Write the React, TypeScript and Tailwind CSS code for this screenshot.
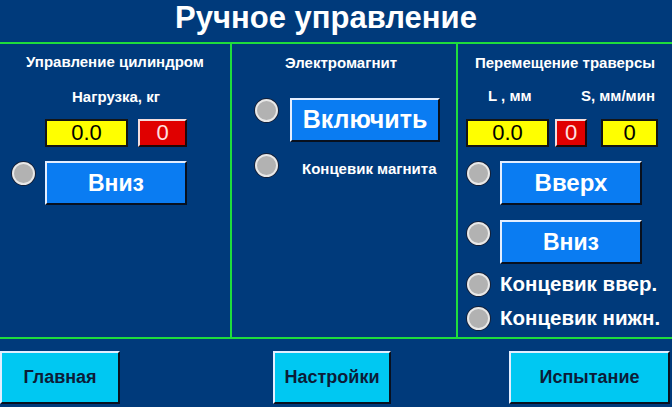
import type { ReactNode } from "react";

const bevel =
  "border-2 border-t-[#e4eeff] border-l-[#e4eeff] border-b-[#08101e] border-r-[#08101e]";

function Lamp({ className = "" }: { className?: string }) {
  return (
    <div
      className={`w-[23px] h-[23px] shrink-0 rounded-full bg-[#b2b2b2] border-2 border-[#e8e8e8] ring-1 ring-[#142038] ${className}`}
    />
  );
}

function BlueButton({
  children,
  className = "",
}: {
  children: ReactNode;
  className?: string;
}) {
  return (
    <button
      className={`h-[44px] bg-[#0a7cf2] text-white font-bold ${bevel} flex items-center justify-center ${className}`}
    >
      {children}
    </button>
  );
}

function YellowBox({ value, className = "" }: { value: string; className?: string }) {
  return (
    <div
      className={`h-[28px] bg-[#ffff00] border-2 border-[#141414] text-black text-[22px] leading-none flex items-center justify-center ${className}`}
    >
      {value}
    </div>
  );
}

function RedBox({ className = "" }: { className?: string }) {
  return (
    <div
      className={`h-[28px] bg-[#e00000] border-2 border-t-[#f4dede] border-l-[#f4dede] border-b-[#200808] border-r-[#200808] text-[#ffe0e0] text-[22px] leading-none flex items-center justify-center ${className}`}
    >
      0
    </div>
  );
}

function NavButton({ label, className = "" }: { label: string; className?: string }) {
  return (
    <button
      className={`h-[53px] bg-[#00c8f2] text-[#0c1c38] text-[18px] font-bold ${bevel} flex items-center justify-center ${className}`}
    >
      {label}
    </button>
  );
}

export default function App() {
  return (
    <div
      className="w-[672px] h-[407px] bg-[#003a7b] text-white overflow-hidden flex flex-col"
      style={{ fontFamily: '"Liberation Sans", Arial, sans-serif' }}
    >
      <div className="h-[42px] pt-[2px] pr-[20px] text-center">
        <h1 className="text-[31px] font-bold leading-none">Ручное управление</h1>
      </div>
      <div className="h-[2px] bg-[#1fdc3c]" />

      <div className="h-[293px] flex">
        {/* Управление цилиндром */}
        <div className="w-[230px] flex flex-col">
          <div className="mt-[9px] text-[15px] font-bold leading-[18px] text-center">
            Управление цилиндром
          </div>
          <div className="mt-[17px] text-[15px] font-bold leading-[18px] text-center pl-[2px]">
            Нагрузка, кг
          </div>
          <div className="mt-[13px] flex gap-[10px] pl-[45px]">
            <YellowBox value="0.0" className="w-[83px]" />
            <RedBox className="w-[49px]" />
          </div>
          <div className="mt-[14px] flex items-start gap-[10px] pl-[12px]">
            <Lamp className="mt-[1px]" />
            <BlueButton className="w-[142px] text-[23px]">Вниз</BlueButton>
          </div>
        </div>

        <div className="w-[2px] bg-[#1fdc3c]" />

        {/* Электромагнит */}
        <div className="w-[224px] flex flex-col">
          <div className="mt-[10px] text-[15px] font-bold leading-[18px] text-center -ml-[6px]">
            Электромагнит
          </div>
          <div className="mt-[26px] flex items-start gap-[12px] pl-[23px]">
            <Lamp className="mt-[1px]" />
            <BlueButton className="w-[150px] text-[25px]">Включить</BlueButton>
          </div>
          <div className="mt-[11px] flex items-center pl-[23px]">
            <Lamp />
            <span className="ml-[24px] mt-[7px] text-[15px] font-bold leading-[18px]">
              Концевик магнита
            </span>
          </div>
        </div>

        <div className="w-[2px] bg-[#1fdc3c]" />

        {/* Перемещение траверсы */}
        <div className="flex-1 flex flex-col">
          <div className="mt-[10px] text-[15px] font-bold leading-[18px] text-center">
            Перемещение траверсы
          </div>
          <div className="mt-[15px] flex text-[15px] font-bold leading-[18px]">
            <span className="ml-[30px]">L , мм</span>
            <span className="ml-auto mr-[17px]">S, мм/мин</span>
          </div>
          <div className="mt-[14px] flex pl-[8px]">
            <YellowBox value="0.0" className="w-[83px]" />
            <RedBox className="w-[32px] ml-[6px]" />
            <YellowBox value="0" className="w-[57px] ml-[14px]" />
          </div>
          <div className="mt-[14px] flex items-start gap-[10px] pl-[9px]">
            <Lamp className="mt-[1px]" />
            <BlueButton className="w-[142px] text-[24px]">Вверх</BlueButton>
          </div>
          <div className="mt-[15px] flex items-start gap-[10px] pl-[9px]">
            <Lamp className="mt-[2px]" />
            <BlueButton className="w-[142px] text-[23px]">Вниз</BlueButton>
          </div>
          <div className="mt-[8px] flex items-center gap-[10px] pl-[9px]">
            <Lamp />
            <span className="text-[20.5px] font-bold leading-6">Концевик ввер.</span>
          </div>
          <div className="mt-[10px] flex items-center gap-[10px] pl-[9px]">
            <Lamp />
            <span className="text-[20.5px] font-bold leading-6">Концевик нижн.</span>
          </div>
        </div>
      </div>

      <div className="h-[2px] bg-[#1fdc3c]" />

      <div className="flex pt-[12px]">
        <NavButton label="Главная" className="w-[120px]" />
        <NavButton label="Настройки" className="w-[118px] ml-[153px]" />
        <NavButton label="Испытание" className="w-[161px] ml-[118px]" />
      </div>
    </div>
  );
}
